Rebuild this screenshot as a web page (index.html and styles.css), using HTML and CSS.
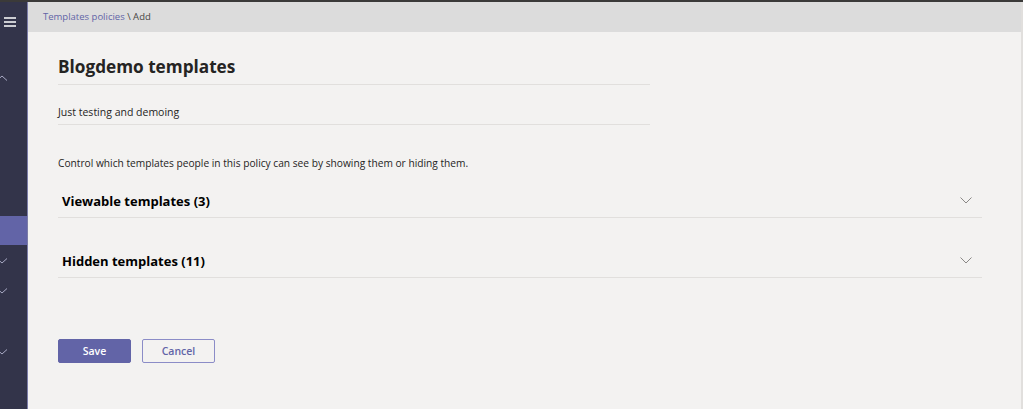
FILE: index.html
```html
<!DOCTYPE html>
<html lang="en">
<head>
    <meta charset="UTF-8">
    <meta name="viewport" content="width=device-width, initial-scale=1.0">
    <title>Templates policies - Add</title>
    <link rel="stylesheet" href="styles.css">
</head>
<body>
    <div class="topline"></div>
    <div class="app">
        <nav class="rail">
            <div class="rail-burger">
                <svg width="12" height="10" viewBox="0 0 12 10"><path d="M0 1h12M0 5h12M0 9h12" stroke="#fff" stroke-width="1.6"/></svg>
            </div>
            <div class="rail-item up"><svg width="10" height="6" viewBox="0 0 10 6"><path d="M0 5.5L5 1l5 4.5" fill="none" stroke="#a8a9c4" stroke-width="1"/></svg></div>
            <div class="rail-active"></div>
            <div class="rail-item d1"><svg width="10" height="6" viewBox="0 0 10 6"><path d="M0 0.5L5 5l5-4.5" fill="none" stroke="#a8a9c4" stroke-width="1"/></svg></div>
            <div class="rail-item d2"><svg width="10" height="6" viewBox="0 0 10 6"><path d="M0 0.5L5 5l5-4.5" fill="none" stroke="#a8a9c4" stroke-width="1"/></svg></div>
            <div class="rail-item d3"><svg width="10" height="6" viewBox="0 0 10 6"><path d="M0 0.5L5 5l5-4.5" fill="none" stroke="#a8a9c4" stroke-width="1"/></svg></div>
        </nav>
        <main class="main">
            <div class="crumbs">
                <a href="#">Templates policies</a> \ Add
            </div>
            <div class="content">
                <h1 class="title">Blogdemo templates</h1>
                <div class="desc">Just testing and demoing</div>
                <p class="intro">Control which templates people in this policy can see by showing them or hiding them.</p>

                <div class="section">
                    <h2>Viewable templates (3)</h2>
                    <svg class="chev" width="12" height="7" viewBox="0 0 12 7"><path d="M0.5 0.5L6 6l5.5-5.5" fill="none" stroke="#8a8886" stroke-width="1"/></svg>
                </div>
                <div class="section">
                    <h2>Hidden templates (11)</h2>
                    <svg class="chev" width="12" height="7" viewBox="0 0 12 7"><path d="M0.5 0.5L6 6l5.5-5.5" fill="none" stroke="#8a8886" stroke-width="1"/></svg>
                </div>

                <div class="actions">
                    <button class="btn primary">Save</button>
                    <button class="btn">Cancel</button>
                </div>
            </div>
        </main>
    </div>
</body>
</html>
```

FILE: styles.css
```css
html, body {
    margin: 0;
    padding: 0;
    height: 100%;
}
body {
    font-family: "Open Sans", "Noto Sans", sans-serif;
    background: #f3f2f1;
    color: #252423;
    overflow: hidden;
}
.topline {
    height: 2px;
    background: #3b3a39;
}
.app {
    display: flex;
    height: 407px;
}
.rail {
    position: relative;
    width: 27px;
    background: #33344a;
    border-right: 1px solid #7b7ca8;
    flex: none;
}
.rail-burger {
    padding: 8px 0 0 4px;
}
.rail-item {
    position: absolute;
    left: -3px;
    line-height: 0;
}
.rail-item.up { top: 73px; }
.rail-item.d1 { top: 256px; }
.rail-item.d2 { top: 286px; }
.rail-item.d3 { top: 347px; }
.rail-active {
    position: absolute;
    top: 214px;
    left: 0;
    right: 0;
    height: 29px;
    background: #6264a7;
}
.main {
    flex: 1;
    border-right: 2px solid #e1dfdd;
}
.crumbs {
    height: 30px;
    line-height: 30px;
    background: #dcdcdc;
    padding-left: 15px;
    font-size: 9.5px;
    color: #484644;
}
.crumbs a {
    color: #6264a7;
    text-decoration: none;
}
.content {
    padding: 23px 0 0 30px;
    width: 924px;
}
.title {
    width: 592px;
    margin: 0;
    padding-bottom: 6px;
    font-size: 17.2px;
    font-weight: 700;
    border-bottom: 1px solid #e1dfdd;
}
.desc {
    width: 592px;
    padding: 20px 0 5px;
    font-size: 10.5px;
    border-bottom: 1px solid #e1dfdd;
}
.intro {
    margin: 31px 0 0;
    font-size: 10.2px;
}
.section {
    display: flex;
    align-items: center;
    justify-content: space-between;
    height: 32px;
    margin-top: 15px;
    padding: 0 10px 0 4px;
    border-bottom: 1px solid #e1dfdd;
}
.section + .section {
    margin-top: 27px;
}
.section h2 {
    margin: 0;
    font-size: 13px;
    font-weight: 700;
    color: #000;
}
.chev {
    margin-top: -2px;
}
.actions {
    display: flex;
    gap: 11px;
    margin-top: 61px;
}
.btn {
    width: 73px;
    height: 24px;
    font-family: inherit;
    font-size: 10.5px;
    font-weight: 600;
    border-radius: 2px;
    border: 1px solid #8b8cc7;
    background: transparent;
    color: #6264a7;
    cursor: pointer;
}
.btn.primary {
    background: #6264a7;
    border-color: #6264a7;
    color: #fff;
}
```
